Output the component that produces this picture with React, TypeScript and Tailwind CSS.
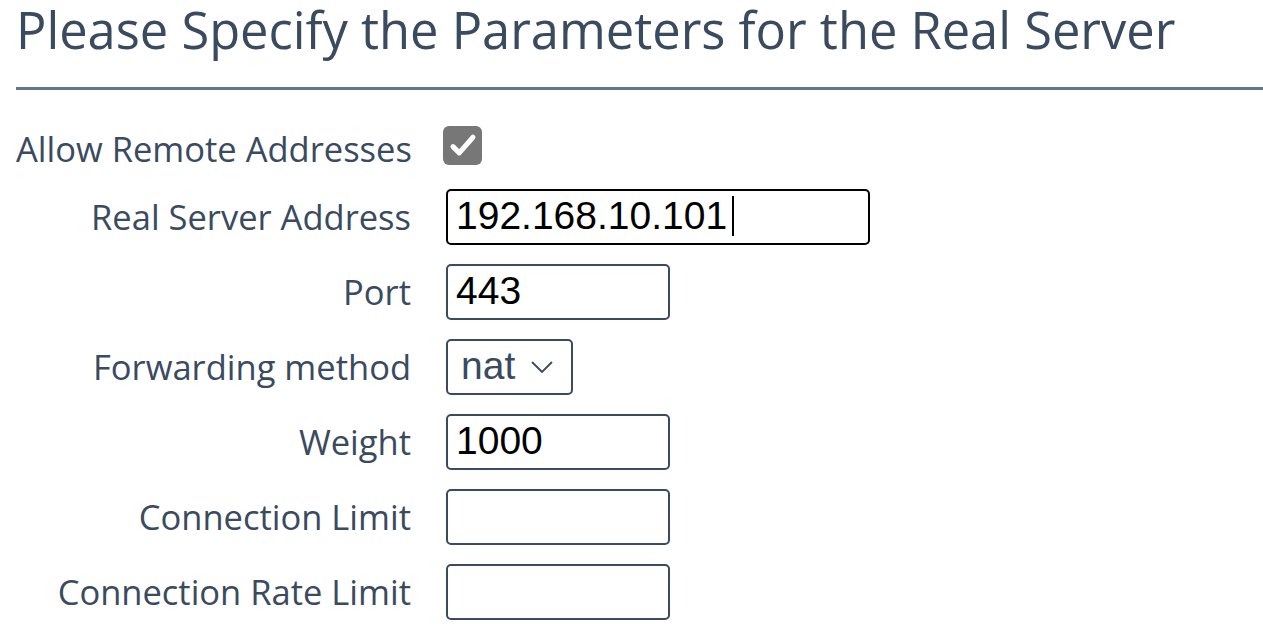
import { useState } from "react";

const font = { fontFamily: '"Open Sans", "Noto Sans", sans-serif' };

function Row({ label, labelCls = "", children }: { label: string; labelCls?: string; children: React.ReactNode }) {
    return (
        <div className="flex items-center h-[75px]">
            <div className={"w-[395px] shrink-0 text-right text-[34.5px] text-[#3a4a5f] whitespace-nowrap " + labelCls}>
                {label}
            </div>
            <div className="ml-[35px] flex items-center">{children}</div>
        </div>
    );
}

export default function App() {
    const [allow, setAllow] = useState(true);

    const inputCls =
        "h-[56px] rounded-[5px] border-2 border-[#3a4a5f] bg-white px-[8px] text-[39px] text-black outline-none font-['Liberation_Sans',Arial,sans-serif]";

    return (
        <div className="min-h-screen bg-white px-4" style={font}>
            {/* Header */}
            <h1 className="text-[50.6px] leading-[60px] text-[#3a4a5f] font-normal whitespace-nowrap">
                Please Specify the Parameters for the Real Server
            </h1>
            <div className="mt-[27px] -mr-4 h-[3px] bg-[#627589]" />

            {/* Form */}
            <div className="mt-[14px]">
                <Row label="Allow Remote Addresses" labelCls="pt-[14px]">
                    <button
                        onClick={() => setAllow(!allow)}
                        className="-ml-[3px] mt-[8px] w-[39px] h-[39px] rounded-[6px] bg-[#777777] flex items-center justify-center"
                    >
                        {allow && (
                            <svg className="w-[30px] h-[30px]" viewBox="0 0 24 24" fill="none" stroke="white" strokeWidth={4} strokeLinecap="round" strokeLinejoin="round">
                                <path d="M4 12.5l5 5L20 5" />
                            </svg>
                        )}
                    </button>
                </Row>
                <Row label="Real Server Address">
                    <div className="relative">
                        <input
                            defaultValue="192.168.10.101"
                            className={inputCls + " w-[424px] border-black"}
                        />
                        {/* text caret */}
                        <span className="absolute left-[286px] top-[7px] w-[2px] h-[40px] bg-black" />
                    </div>
                </Row>
                <Row label="Port">
                    <input defaultValue="443" className={inputCls + " w-[224px]"} />
                </Row>
                <Row label="Forwarding method">
                    <div className="h-[56px] w-[127px] rounded-[5px] border-2 border-[#3a4a5f] flex items-center pl-[13px] text-[39px] text-[#3a4a5f] font-['Liberation_Sans',Arial,sans-serif]">
                        <span>nat</span>
                        <svg className="ml-[16px] w-[22px] h-[12px]" viewBox="0 0 22 12" fill="none" stroke="#3a4a5f" strokeWidth={1.8}>
                            <path d="M1 1l10 10L21 1" />
                        </svg>
                    </div>
                </Row>
                <Row label="Weight">
                    <input defaultValue="1000" className={inputCls + " w-[224px]"} />
                </Row>
                <Row label="Connection Limit">
                    <input defaultValue="" className={inputCls + " w-[224px]"} />
                </Row>
                <Row label="Connection Rate Limit">
                    <input defaultValue="" className={inputCls + " w-[224px]"} />
                </Row>
            </div>
        </div>
    );
}
